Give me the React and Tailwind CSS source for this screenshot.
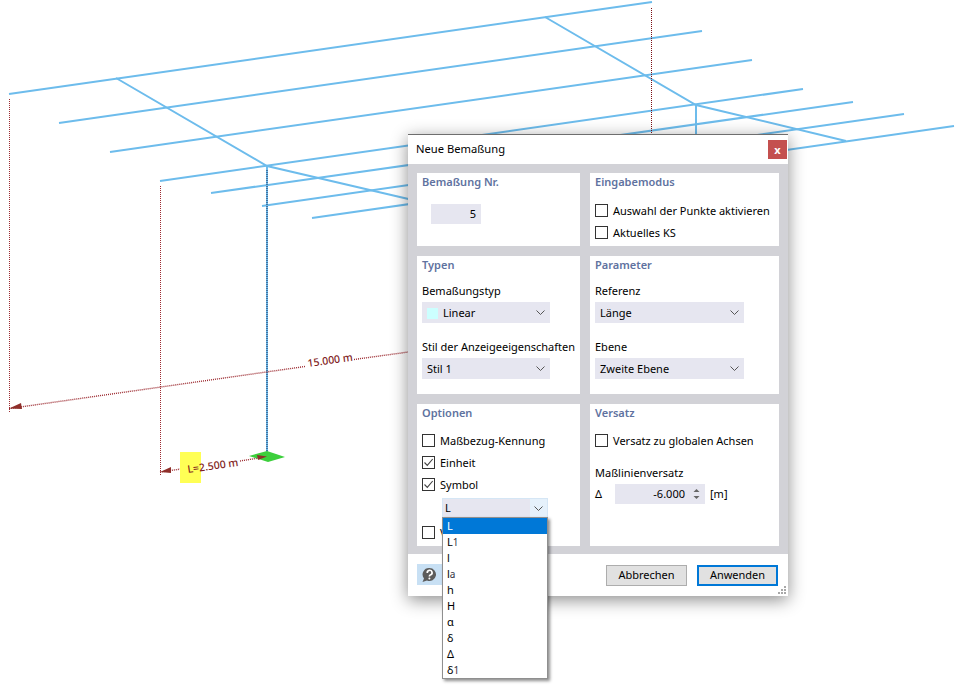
import React from "react";

const Chevron = () => (
  <svg width="9" height="5" viewBox="0 0 9 5" className="shrink-0" fill="none" stroke="#555" strokeWidth="1">
    <path d="M0.5 0.5 L4.5 4.5 L8.5 0.5" />
  </svg>
);

const Check = ({ checked, label }) => (
  <div className="flex items-center h-[13px] gap-[5px]">
    <div className="w-[13px] h-[13px] border border-[#333] bg-white shrink-0 flex items-center justify-center">
      {checked && (
        <svg width="11" height="11" viewBox="0 0 11 11" fill="none" stroke="#444" strokeWidth="1.1">
          <path d="M1.5 5.5 L4.3 8.4 L9.7 2" />
        </svg>
      )}
    </div>
    <span className="leading-[16px] whitespace-nowrap">{label}</span>
  </div>
);

const Combo = ({ w, children }) => (
  <div className={`${w} h-[21px] mt-[3px] bg-[#e6e6f0] flex items-center justify-between pl-[5px] pr-[5px]`}>
    <div className="flex items-center gap-[5px] pt-[1px]">{children}</div>
    <Chevron />
  </div>
);

const Panel = ({ title, children }) => (
  <div className="bg-white pt-[1px] px-[5px] flex flex-col relative">
    <div className="font-semibold text-[#6072a0] leading-[16px]">{title}</div>
    {children}
  </div>
);

const Sub = ({ a, b }) => (
  <>
    {a}
    <span className="text-[10px] text-[#334]">{b}</span>
  </>
);

const items = [
  ["L"],
  ["L", "1"],
  ["l"],
  ["l", "a"],
  ["h"],
  ["H"],
  ["α"],
  ["δ"],
  ["Δ"],
  ["δ", "1"],
];

const blue = [
  [9, 94, 652, 2],
  [59, 123, 702, 31],
  [110, 152, 752, 60],
  [160, 181, 803, 89],
  [211, 193, 853, 102],
  [262, 206, 904, 114],
  [312, 218, 954, 126],
];

const Scene = () => (
  <svg className="absolute inset-0" width="955" height="687" viewBox="0 0 955 687" fill="none">
    <g stroke="#6dbcec" strokeWidth="2">
      {blue.map((l, i) => (
        <line key={i} x1={l[0]} y1={l[1]} x2={l[2]} y2={l[3]} />
      ))}
      <polyline points="116,78 267,166 417,201" />
      <polyline points="545,17 696,105 846,141" />
      <line x1="696" y1="105" x2="696" y2="140" />
      <line x1="267" y1="166" x2="267" y2="455" />
    </g>
    <g stroke="#9c2a30" strokeWidth="1" strokeDasharray="1 1">
      <line x1="9.5" y1="99" x2="9.5" y2="412" />
      <line x1="160.5" y1="186" x2="160.5" y2="476" />
      <line x1="651.5" y1="8" x2="651.5" y2="140" stroke="#7a0f14" />
      <line x1="267" y1="170" x2="267" y2="455" stroke="#1f2a55" />
      <line x1="9" y1="408.6" x2="305" y2="366.5" strokeWidth="1.4" />
      <line x1="354" y1="359.5" x2="412" y2="351.5" strokeWidth="1.4" />
      <line x1="160" y1="472" x2="188" y2="468" strokeWidth="1.4" />
      <line x1="240" y1="461" x2="268" y2="456.5" strokeWidth="1.4" />
    </g>
    <polygon points="9,408.6 21,403 22,409" fill="#8f2f2a" />
    <polygon points="160,472 171,467 171,473" fill="#8f2f2a" />
    <rect x="180" y="452" width="21" height="31" fill="#ffff55" />
    <polygon points="249,456 267,451 285,457 268,462" fill="#3ccf3c" />
    <polygon points="267,456.5 257,455 258,460" fill="#8f2f2a" />
    <text x="308" y="367" transform="rotate(-8 308 367)" fontSize="10.5" fontWeight="500" fill="#7f1d22" fontFamily="'Noto Sans', sans-serif">15.000 m</text>
    <text x="188" y="473" transform="rotate(-8 188 473)" fontSize="10.5" fontWeight="500" fill="#7f1d22" fontFamily="'Noto Sans', sans-serif">L=2.500 m</text>
  </svg>
);

export default function App() {
  return (
    <div className="relative w-[955px] h-[687px] overflow-hidden bg-white text-[11px] text-black font-['Noto_Sans',sans-serif]">
      <Scene />
      <div className="absolute left-[408px] top-[134px] w-[380px] h-[462px] flex flex-col bg-white border-t border-[#6e6e6e] shadow-[0_4px_16px_rgba(0,0,0,0.45)]">
        <div className="h-[29px] shrink-0 flex items-center justify-between pl-[8px] pr-[1px]">
          <span className="text-[11.2px]">Neue Bemaßung</span>
          <div className="w-[19px] h-[19px] bg-[#c4504f] text-white font-bold text-[11px] leading-none flex items-center justify-center">x</div>
        </div>
        <div className="h-[390px] shrink-0 bg-[#d2d2d7] pt-[9px] pl-[9px] grid grid-cols-[163px_189px] grid-rows-[73px_138px_142px] gap-[10px]">
          <Panel title="Bemaßung Nr.">
            <div className="mt-[14px] ml-[9px] w-[50px] h-[20px] bg-[#e6e6f0] flex items-center justify-end pr-[5px]">5</div>
          </Panel>
          <Panel title="Eingabemodus">
            <div className="mt-[14px] flex flex-col gap-[9px]">
              <Check label="Auswahl der Punkte aktivieren" />
              <Check label="Aktuelles KS" />
            </div>
          </Panel>
          <Panel title="Typen">
            <div className="mt-[10px] leading-[16px]">Bemaßungstyp</div>
            <Combo w="w-[128px]">
              <div className="w-[11px] h-[11px] bg-[#ccffff]" />
              <span>Linear</span>
            </Combo>
            <div className="mt-[16px] leading-[16px] whitespace-nowrap">Stil der Anzeigeeigenschaften</div>
            <Combo w="w-[128px]">
              <span>Stil 1</span>
            </Combo>
          </Panel>
          <Panel title="Parameter">
            <div className="mt-[10px] leading-[16px]">Referenz</div>
            <Combo w="w-[149px]">
              <span>Länge</span>
            </Combo>
            <div className="mt-[16px] leading-[16px]">Ebene</div>
            <Combo w="w-[149px]">
              <span>Zweite Ebene</span>
            </Combo>
          </Panel>
          <Panel title="Optionen">
            <div className="mt-[13px] flex flex-col gap-[9px]">
              <Check label="Maßbezug-Kennung" />
              <Check checked label="Einheit" />
              <Check checked label="Symbol" />
            </div>
            <div className="relative mt-[7px] ml-[20px] w-[106px] h-[20px] bg-[#e6e6f0] border border-[#d5e6f5] flex items-center justify-between pl-[2px]">
              <span>L</span>
              <div className="w-[17px] h-full bg-[#e5f1fb] flex items-center justify-center">
                <Chevron />
              </div>
              <div className="absolute left-[-1px] top-[18px] w-[106px] z-10 bg-white border border-[#8f8f8f] shadow-[2px_2px_3px_rgba(0,0,0,0.45)]">
                {items.map((it, i) => (
                  <div key={i} className={`h-[16px] pl-[4px] leading-[16px] ${i === 0 ? "bg-[#0078d7] text-white" : ""}`}>
                    {it[1] ? <Sub a={it[0]} b={it[1]} /> : it[0]}
                  </div>
                ))}
              </div>
            </div>
            <div className="mt-[8px]">
              <Check label="V" />
            </div>
          </Panel>
          <Panel title="Versatz">
            <div className="mt-[13px]">
              <Check label="Versatz zu globalen Achsen" />
            </div>
            <div className="mt-[18px] leading-[16px]">Maßlinienversatz</div>
            <div className="mt-[3px] flex items-center h-[20px]">
              <span className="w-[20px]">Δ</span>
              <div className="w-[90px] h-[20px] bg-[#e6e6f0] flex items-center justify-end pr-[4px] gap-[7px]">
                <span>-6.000</span>
                <svg width="9" height="14" viewBox="0 0 9 14" fill="#666">
                  <path d="M4.5 2 L7.5 5 L1.5 5 Z" />
                  <path d="M4.5 12 L7.5 9 L1.5 9 Z" />
                </svg>
              </div>
              <span className="ml-[5px]">[m]</span>
            </div>
          </Panel>
        </div>
        <div className="relative flex-1 flex items-center justify-between pl-[9px] pr-[10px]">
          <div className="w-[26px] h-[21px] bg-[#c8e0f4] flex items-center pl-[4px] -mt-[1px]">
            <svg width="16" height="16" viewBox="0 0 16 16">
              <path d="M8.5 1 A6.5 6.5 0 1 1 6 13.5 L1.5 15 L3 11.5 A6.5 6.5 0 0 1 8.5 1 Z" fill="#5c5c5c" />
              <path d="M6.3 6 A2.4 2.4 0 1 1 9.2 8 Q8.4 8.4 8.4 9.6" fill="none" stroke="#fff" strokeWidth="1.7" />
              <circle cx="8.4" cy="11.6" r="1" fill="#fff" />
            </svg>
          </div>
          <div className="flex gap-[10px]">
            <div className="w-[81px] h-[21px] bg-[#e1e1e1] border border-[#adadad] flex items-center justify-center">Abbrechen</div>
            <div className="w-[81px] h-[21px] bg-[#e1e1e1] border-2 border-[#0078d7] flex items-center justify-center">Anwenden</div>
          </div>
          <svg className="absolute right-[2px] bottom-[2px]" width="8" height="8" viewBox="0 0 8 8" fill="#a8a8a8">
            <rect x="6" y="0" width="2" height="2" />
            <rect x="3" y="3" width="2" height="2" />
            <rect x="6" y="3" width="2" height="2" />
            <rect x="0" y="6" width="2" height="2" />
            <rect x="3" y="6" width="2" height="2" />
            <rect x="6" y="6" width="2" height="2" />
          </svg>
        </div>
      </div>
    </div>
  );
}
